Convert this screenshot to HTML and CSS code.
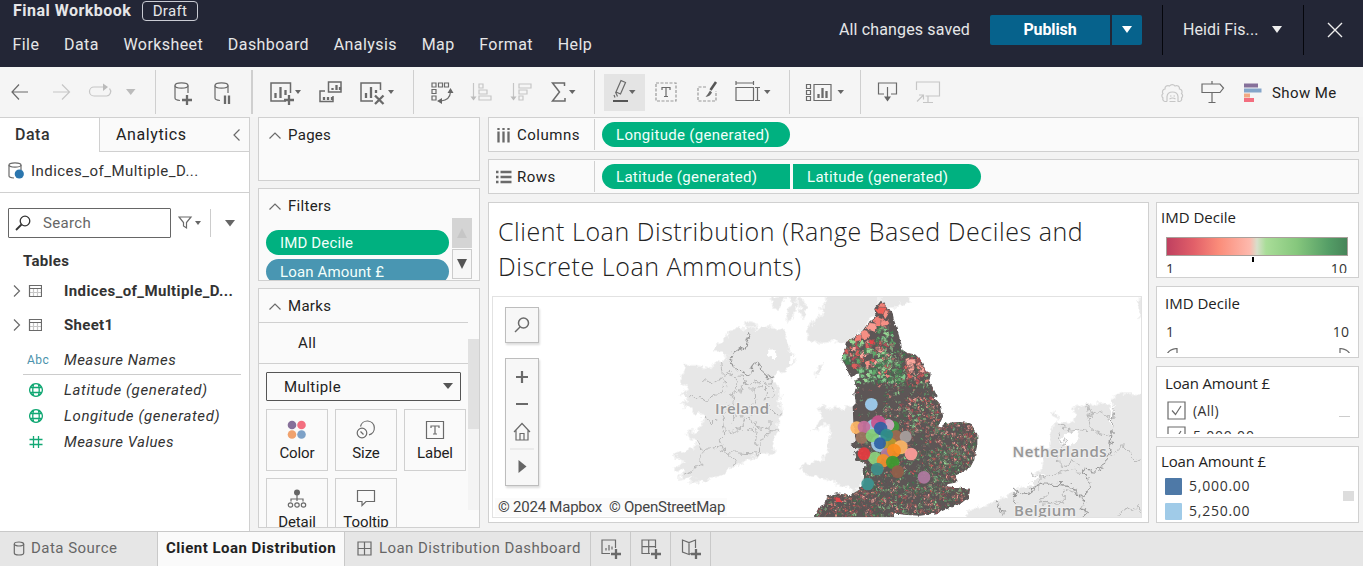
FILE: index.html
```html
<!DOCTYPE html>
<html lang="en">
<head>
<meta charset="utf-8">
<title>Final Workbook</title>
<link rel="stylesheet" href="styles.css">
</head>
<body>
<div class="app">
  <header class="top">
    <div class="top-left">
      <div class="title-row"><span class="wb">Final Workbook</span><span class="draft">Draft</span></div>
      <nav class="menu"><span>File</span><span>Data</span><span>Worksheet</span><span>Dashboard</span><span>Analysis</span><span>Map</span><span>Format</span><span>Help</span></nav>
    </div>
    <div class="top-right">
      <span class="saved">All changes saved</span>
      <div class="publish"><span class="pub-main">Publish</span><span class="pub-drop"><svg width="10" height="8"><path d="M0 0h10l-5 7z" fill="#fff"/></svg></span></div>
      <div class="user"><span>Heidi Fis...</span><svg width="10" height="8"><path d="M0 0h10l-5 7z" fill="#eee"/></svg></div>
      <div class="close"><svg width="16" height="16"><path d="M1 1l14 14M15 1L1 15" stroke="#eee" stroke-width="1.400"/></svg></div>
    </div>
  </header>

  <div class="toolbar">
    <svg class="tb" width="155" height="50" viewBox="0 67 155 50">
      <path d="M28 92H12M19 84.500L12 92l7 7.500" class="i"/>
      <path d="M53 92h16M62 84.500L69.500 92 62 99.500" class="i l"/>
      <path d="M100 87h-6a4.500 4.500 0 0 0 0 9h12.500a4.500 4.500 0 0 0 3-7.500M98 87h7" class="i l"/><path d="M103 83.500l5 3.500-5 4z" class="fl"/>
      <path d="M126 89h9.500l-4.750 6z" class="fl"/>
    </svg>
    <i class="sep"></i>
    <svg class="tb" width="95" height="50" viewBox="156 67 95 50">
      <g class="i"><ellipse cx="181.500" cy="85.500" rx="6.500" ry="2.700"/><path d="M175 85.500v12.500q0 2 5 2.500M188 85.500v7.500"/>
      <ellipse cx="221.500" cy="85.500" rx="6.500" ry="2.700"/><path d="M215 85.500v12.500q0 2 5 2.500M228 85.500v7.500"/></g>
      <path d="M187 95v10M182 100h10M225 95.500v8.500M229 95.500v8.500" class="b"/>
    </svg>
    <i class="sep wide"></i>
    <svg class="tb" width="160" height="50" viewBox="253 67 160 50">
      <path d="M290.500 93V83h-19.500v18h15M380.500 90V83h-19.500v18h12" class="i w"/>
      <path d="M275.500 93v5M280.500 87v11M285.500 90v5M366 93v5M371 87v11M376 90v3M332.500 88v2M336.500 85v5M340 87v3M324 97v3M328 97v3M332 97v3" class="b"/>
      <path d="M289 95v10M284 100h10M375 95.500l8.500 8.500M383.500 95.500l-8.500 8.500" class="b"/>
      <path d="M328.500 82h12.500v10h-12.500zM325 91h-5v10.500h13V96" class="i w"/>
      <path d="M295 90h6l-3 4zM388 90h6l-3 4z" class="f"/>
    </svg>
    <i class="sep"></i>
    <svg class="tb" width="180" height="50" viewBox="414 67 180 50">
      <path d="M432 83h4v4h-4zM438.500 83h4v4h-4zM444.500 83h4v4h-4zM432 89.500h4v4h-4zM432 96h4v4h-4zM441 101q9-1 9.500-9" class="i"/><path d="M450.500 88l3 5h-6zM437 101l5-3v6z" class="f"/>
      <path d="M473.500 83v14M513.500 83v14M479 84h4v4h-4zM479 90h8v4h-8zM479 96h12v4h-12zM519 84h12v4h-12zM519 90h8v4h-8zM519 96h4v4h-4z" class="i l"/>
      <path d="M470.500 96.500h6l-3 4zM510.500 96.500h6l-3 4z" class="fl"/>
      <path d="M564.500 86v-3H552.500l7 9-7 9h12.500v-3" class="i w"/><path d="M569 90h6.500l-3.250 4z" class="f"/>
    </svg>
    <i class="sep"></i>
    <svg class="tb" width="194" height="50" viewBox="595 67 194 50">
      <path d="M604 74h41v37h-41z" fill="#e4e4e4"/>
      <path d="M621 80.500l4.500 2-5 11.500-4.500-2zM615.500 92l2 4.500M614 95l1 2.500" class="i"/><path d="M613 101h15" stroke="#555" stroke-width="2"/><path d="M629 90h6.500l-3.250 4zM764 90h6.500l-3.250 4z" class="f"/>
      <path d="M656 83h20v18h-20z" class="i d"/><path d="M662 90v-2.500h8V90M666 88v8.500M664 96.500h4" class="i"/>
      <path d="M706 87h-8v14h18V91" class="i d"/><path d="M716 82l-5.500 8" stroke="#555" stroke-width="2.600" fill="none"/><path d="M710 90.500l2 2q-2 4-6.500 4.500 2.500-3 4.500-6.500z" class="f"/>
      <path d="M736 83h17.500M736 81v4M753.500 81v4M736 87.500h17.500v13H736zM755 87.500h5M757.500 87.500v13M755 100.500h5" class="i"/>
    </svg>
    <i class="sep"></i>
    <svg class="tb" width="70" height="50" viewBox="790 67 70 50">
      <path d="M806.500 84.500h4v4h-4zM806.500 90.500h4v4h-4zM806.500 96.500h4v4h-4zM814 84.500h17v16h-17z" class="i"/><path d="M818.500 94v4M822.500 88v10M826.500 91v7" class="b"/><path d="M837.500 90h6.500l-3.250 4z" class="f"/>
    </svg>
    <i class="sep"></i>
    <svg class="tb" width="100" height="50" viewBox="861 67 100 50">
      <path d="M884 94h-5.500V83h18v11H891M887.500 87v11" class="i"/><path d="M884 96.500h7l-3.500 5z" class="f"/>
      <path d="M916.500 90v-8h23v14h-14M928 96v6M923 102.500h10M917 101.500l6-6M919 95h4.500v4.500" class="i l"/>
    </svg>
    <svg class="tb right" width="80" height="50" viewBox="1155 67 80 50">
      <path d="M1167 101.500h-2a2.500 2.500 0 0 1-2-3.500 2.800 2.800 0 0 1 0-4.500 2.800 2.800 0 0 1 2-4.500 3 3 0 0 1 4.500-3 3.400 3.400 0 0 1 5.500 0 3 3 0 0 1 4.500 3 2.800 2.800 0 0 1 2 4.500 2.800 2.800 0 0 1 0 4.500 2.500 2.500 0 0 1-2 3.500h-2M1167 101.500v-5q.5-4.500 5.500-4.500t5.500 4.500v5M1169.500 99q3-2 6 0M1170 96h1.500M1173.500 96h1.500M1169.500 101.500h6" class="i l"/>
      <path d="M1202 84h18l3.500 4-3.500 4.500h-18zM1212 81v3M1212 92.500v10M1208.500 102.500h7" class="i"/>
    </svg>
    <div class="showme"><svg width="18" height="20"><path d="M0 .5h14v4H0z" fill="#86709a"/><path d="M0 5.500h17.500v4H0z" fill="#84a5c9"/><path d="M0 10.500h6v4H0z" fill="#f0a882"/><path d="M0 15h10v4H0z" fill="#f36e7f"/></svg><span>Show Me</span></div>
  </div>

  <div class="work">
    <aside class="data-pane">
      <div class="tabs"><span class="tab on">Data</span><span class="tab off">Analytics<svg width="7" height="12"><path d="M6.500.5L1 6l5.500 5.500" class="i"/></svg></span></div>
      <div class="source"><svg width="17" height="18"><path d="M1 3v11q0 1.500 5 2M13 3v5" class="i"/><ellipse cx="7" cy="3" rx="6" ry="2.200" class="i"/><circle cx="11.300" cy="12" r="4.600" fill="#2b76ae"/></svg><span>Indices_of_Multiple_D...</span></div>
      <div class="search-row">
        <div class="search"><svg width="16" height="16"><circle cx="10" cy="6" r="4.800" fill="none" stroke="#333" stroke-width="1.300"/><path d="M6.500 9.500L1 15" stroke="#333" stroke-width="1.800"/></svg><span>Search</span></div>
        <svg class="funnel" width="23" height="14"><path d="M1 1h12L8.500 6.500V12l-3-2V6.500z" class="i"/><path d="M17 5h6l-3 4z" class="f"/></svg>
        <i></i>
        <svg width="10" height="7"><path d="M0 0h10L5 6.500z" class="f"/></svg>
      </div>
      <h3>Tables</h3>
      <div class="trow"><svg width="29" height="14"><path d="M1 1.500L6.500 7 1 12.500" class="i"/><g transform="translate(16 1)"><path d="M4.500 4v7.500M8.500 4v7.500M.5 7.500h12" class="i l"/><path d="M.5.500h12v11H.5zM.5 3.500h12" class="i"/></g></svg><span>Indices_of_Multiple_D...</span></div>
      <div class="trow"><svg width="29" height="14"><path d="M1 1.500L6.500 7 1 12.500" class="i"/><g transform="translate(16 1)"><path d="M4.500 4v7.500M8.500 4v7.500M.5 7.500h12" class="i l"/><path d="M.5.500h12v11H.5zM.5 3.500h12" class="i"/></g></svg><span class="tight">Sheet1</span></div>
      <div class="field names"><b>Abc</b><span>Measure Names</span></div>
      <div class="field"><svg width="14" height="14"><path d="M7 .7a6.300 6.300 0 1 0 .01 0zM1.500 4.500h11M1.500 9.500h11M4.500 1.500q-1.500 5.500 0 11M9.500 1.500q1.500 5.500 0 11" class="g"/></svg><span class="wide">Latitude (generated)</span></div>
      <div class="field"><svg width="14" height="14"><path d="M7 .7a6.300 6.300 0 1 0 .01 0zM1.500 4.500h11M1.500 9.500h11M4.500 1.500q-1.500 5.500 0 11M9.500 1.500q1.500 5.500 0 11" class="g"/></svg><span class="wide">Longitude (generated)</span></div>
      <div class="field"><svg width="14" height="14"><path d="M4.500 1v12M9.500 1v12M.5 4.500h13M.5 9.500h13" class="g"/></svg><span>Measure Values</span></div>
    </aside>

    <section class="cards">
      <div class="card pages"><div class="head"><svg width="12" height="7"><path d="M.5 6.500L6 1l5.500 5.500" class="i"/></svg>Pages</div></div>
      <div class="card filters">
        <div class="head"><svg width="12" height="7"><path d="M.5 6.500L6 1l5.500 5.500" class="i"/></svg>Filters</div>
        <div class="filter-body">
          <div class="pills"><span class="pill gr">IMD Decile</span><span class="pill bl">Loan Amount £</span></div>
          <div class="scroller"><span class="up"><svg width="10" height="10"><path d="M5 0l5 10H0z" fill="#c6c6c6"/></svg></span><span class="dn"><svg width="10" height="10"><path d="M0 0h10L5 10z" fill="#555"/></svg></span></div>
        </div>
      </div>
      <div class="card marks">
        <div class="marks-main">
          <div class="head"><svg width="12" height="7"><path d="M.5 6.500L6 1l5.500 5.500" class="i"/></svg>Marks</div>
          <div class="all">All</div>
          <div class="select"><span>Multiple</span><svg width="10" height="7"><path d="M0 0h10L5 6z" fill="#555"/></svg></div>
          <div class="mgrid">
            <div><svg width="20" height="20"><circle cx="5" cy="5" r="4.300" fill="#86709a"/><circle cx="14.500" cy="5" r="4.300" fill="#f36e7f"/><circle cx="5" cy="14.500" r="4.300" fill="#f0a26e"/><circle cx="14.500" cy="14.500" r="4.300" fill="#7da1c7"/></svg>Color</div>
            <div><svg width="20" height="20"><path d="M4.500 6.500A7 7 0 1 1 13 14.800" class="i"/><circle cx="6" cy="13" r="4.800" class="i"/><path d="M4.500 11.500l3 3" class="i"/></svg>Size</div>
            <div><svg width="20" height="20"><path d="M1.500 1.500h17v17h-17zM6 8V6h8v2M10 6v8M8 14h4" class="i"/></svg>Label</div>
            <div><svg width="20" height="20"><circle cx="10" cy="3.500" r="3" class="f"/><path d="M10 5v7M4 12.500V10h12v2.500" class="i"/><g class="i"><circle cx="3.500" cy="16" r="2.200"/><circle cx="10" cy="16" r="2.200"/><circle cx="16.500" cy="16" r="2.200"/></g></svg>Detail</div>
            <div><svg width="20" height="20"><path d="M1.500 1.500h17v11H10L6 16.500v-4H1.500z" class="i"/></svg>Tooltip</div>
          </div>
        </div>
        <div class="track"><i></i></div>
      </div>
    </section>

    <main class="sheet">
      <div class="shelf"><div class="label"><svg width="16" height="16"><path d="M2.500 4.500v11M7.500 4.500v11M12.500 4.500v11M2.500 1v2M7.500 1v2M12.500 1v2" class="b"/></svg>Columns</div><span class="pill gr w">Longitude (generated)</span></div>
      <div class="shelf"><div class="label"><svg width="16" height="16"><path d="M4.500 3h11M4.500 8h11M4.500 13h11M0 3h2.500M0 8h2.500M0 13h2.500" class="b"/></svg>Rows</div><span class="pill gr w flat-r">Latitude (generated)</span><span class="pill gr w flat-l">Latitude (generated)</span></div>
      <div class="view">
        <div class="viz">
          <h1>Client Loan Distribution (Range Based Deciles and<br>Discrete Loan Ammounts)</h1>
          <div class="map">
            <svg width="648" height="220" viewBox="493 297 648 220">
              <filter id="coast" x="-5%" y="-5%" width="110%" height="110%"><feTurbulence type="fractalNoise" baseFrequency=".05" numOctaves="3" seed="4"/><feDisplacementMap in="SourceGraphic" scale="30" xChannelSelector="R" yChannelSelector="G"/></filter>
              <filter id="edge" x="-5%" y="-5%" width="110%" height="110%"><feTurbulence type="fractalNoise" baseFrequency=".09" numOctaves="2" seed="9"/><feDisplacementMap in="SourceGraphic" scale="12" xChannelSelector="R" yChannelSelector="G"/></filter>
              <g transform="translate(660 290) scale(.3333)">
                <g filter="url(#coast)">
                <g class="land">
                  <path d="M160 185l30-35 15-22 30-16 18 8 9-22 28 8-5 10 35-6 40 4 15 16 12 35-3 20 17 5 4 25-20 20-12 6-24 7-4 12 0 18 12 22 4 40 3 35-12 52-15 40 5 20-40 5-30 15-30 14-30 14-40 25-50 16-35 2 14-16-48 6 20-22-30-10 30-20-34-20 24-10 42-10 8-25-26-5-5-20 36-10 10-20 5-14-72-42 30-8-30-16 30-20-25-10-4-28 15-32h35l40 8 10-14 24-8 14-16z"/>
                  <path d="M497 5l3 30-20 20 5 20-30 25-15 25 5 20 35 15 40-5 40 5 30-25 50-55 100-45V5z"/>
                  <path d="M660 5v60l90-30V5zM330 30l15-12 32 0-2 18-24 24-11-14zM390 15l18 8 2 28-16 40-12 8-2-34 14-20zM415 22l20 8 2 40-12 12-9-34zM465 245l15-22 12-2-6 24-15 13zM250 100l10-8 28 6-14 20z"/>
                  <path d="M470 355l20-7 12 10 38-4 40-6 100 0 0 180-70 30-10 40-22 4-30-14-30-16-34-6-30-6-20-10-14-15 16-14 50-10 14-20 10-46-5-42-12-2-20 20-15-4 20-28 10-10z"/>
                </g>
                <path d="M325 180l22-3 2 18-9 13-15-10zM388 198l8-10 5 25-14 15z" fill="#fff"/>
                <path class="border" d="M270 130l-8 20-6 24-20 5-10 6-21 27 30 28 26 12 14-7 11-28 8-1 10 16 2 16 20 17 20-5"/>
                <path class="county" d="M185 212l5 40 22 8 38-2 10 30 25-14 20 8 40-10M88 320l32 0 16 12 24-18 32-4 6-30-8-14-30 10-28-4M192 256l20-10 20 26-4 24-14 30M260 284l-36 26-6 34 10 20M262 300l26 0 2 26-20 34M288 300l30-18 30 24M318 282l-4 48 30-10M130 380l22 18 20-2M205 340l-16 40 8 50-16 16 6 26M228 364l-16 36M236 372l20 20 16-16 12 38 24 4 20-10M256 392l-14 26-40 10M262 418l30 6-6 30 16 38M112 450l12 32-2 44-46 32M124 480l46-8 34 16 90 4M204 488l24 34M292 488l16-40 22-26 28 2M330 390v40M250 258l10 30M310 340l30 30 20 2"/>
                </g>
              </g>
              <g transform="translate(810 290) scale(.3333)">
                <g filter="url(#coast)">
                <path class="land" d="M470 665l50-20 40-10 40-25 40-20 30-30 20-20 25-60 10-60 10-25 25 0 25 5 15-30-10-15 40-10 50-5 25 5 0-25 45-10 70 5V730H470zM728 368l10-2 8 16-8 8zM985 30l30-10v50l-22 10z"/>
                <path d="M755 445l35-28 18 6-6 26-22 20-20 2zM628 580l40-20 50-8-60 24 20 14-40 4zM902 322l6-14 4 60-6 60-4-50z" fill="#fff"/>
                <path class="county" d="M836 345l8 30-8 34 30 20 34 10M750 395l14 28 40-6 30 8M836 380l30-16 40 20M750 430l14 30-20 36 4 34 44-14 20 6M660 548l30 14 40-10 40-12 50 8 26 30M690 560v40M690 640l70-10 0-30M760 600l50 10 10 30M900 500l40-36 24 30 22 20M925 675l34-24 10 16 18-18 4 20M715 605l-26 30 60 12 14-10"/>
                <path class="border" d="M913 365l-8 75-6 26 4 14-18 26-4 24-30 10-28-2-5 12 14 10 4 34-8 24-20 6-8-24-14-6-6-8-30-2-50-2-20 8-26 20-24-4-16-8 6 40M560 630l10 30 14 4-4 12M815 620l12 20-14 10 16 20-10 10"/>
                </g>
              </g>
              <g class="maplabel"><text x="715" y="413.500" textLength="54">Ireland</text><text x="1012.500" y="456.500" textLength="94">Netherlands</text><text x="1014" y="515.500" textLength="62">Belgium</text></g>
              <g transform="translate(810 290) scale(.3333)">
                <clipPath id="eng"><path id="engp" d="M213 35l9 7 10 18 13 5 5 25 10 30 10 35 5 25 15 10 25 5 15 15 15 30 15 15-5 20 10 15 15 30-15-5 25 30 7 35-12 25-10 3 20 7 15-15 40-2 30 4 20 28v35l-10 45-10 20-30 18-15 7 5 20-25 5-15 10 78 8-3 22-25 20-40 15-30 13-50 7-50-3-30-4-10 40H0l30-58 15-5 5-23 30-10 40 6 30-18 15-25-5-35 10-20-30-10-5-20 20-15-25-5-5-5 15-10-8-60-2-45 10-10-5-30 5-20-5-20 15-5v-15l-10-2-15 14-10-22-10-20-8-13 8-25 5-25 30-15 20-20 15-20 25-20-5-25z"/></clipPath>
                <g filter="url(#edge)">
                  <use href="#engp" fill="#5d5757" stroke="#5d5757" stroke-width="4"/>
                  <g id="cells" clip-path="url(#eng)"></g>
                </g>
                <g id="dots"></g>
              </g>
            </svg>
            <div class="mctl find"><svg width="18" height="18"><circle cx="10.500" cy="7" r="5" class="i w"/><path d="M7 11l-5 5" class="i w"/></svg></div>
            <div class="mctl tools">
              <svg width="32" height="126" viewBox="0 0 32 126"><path d="M16 12v12M10 18h12M10 45h12" class="i t"/><path d="M8 73l8-8.500 8 8.500M10 71v10h12V71M14 81v-6.500h4V81" class="i"/><path d="M4 90h24" stroke="#ddd"/><path d="M12.500 101l8 6.500-8 6.500z" class="f"/></svg>
            </div>
            <div class="attrib">© 2024 Mapbox&nbsp; © OpenStreetMap</div>
          </div>
        </div>
        <div class="legends">
          <div class="leg l1"><h4>IMD Decile</h4><div class="ramp"></div><i class="tick"></i><div class="range cut"><span>1</span><span>10</span></div></div>
          <div class="leg l2"><h4>IMD Decile</h4><div class="range"><span>1</span><span>10</span></div><div class="handles"><svg width="12" height="6"><path d="M1 6Q4 1 11 .5V6" class="i"/></svg><svg width="12" height="6"><path d="M11 6Q8 1 1 .5V6" class="i"/></svg></div></div>
          <div class="leg l3"><h4>Loan Amount £</h4><div class="checks"><div><svg width="19" height="19"><path d="M1 1h17v17H1zM5 9.500l3.500 4L14 5" class="i"/></svg><span>(All)</span></div><div><svg width="19" height="19"><path d="M1 1h17v17H1zM5 9.500l3.500 4L14 5" class="i"/></svg><span class="num">5,000.00</span></div></div><i class="bar"></i></div>
          <div class="leg l4"><h4>Loan Amount £</h4><div class="sw"><i class="c1"></i>5,000.00</div><div class="sw"><i class="c2"></i>5,250.00</div><i class="thumb"></i></div>
        </div>
      </div>
    </main>
  </div>

  <footer class="sheets">
    <span class="st ds"><svg width="12" height="15"><ellipse cx="6" cy="3" rx="4.700" ry="2" class="i"/><path d="M1.300 3v9q0 2 4.700 2t4.700-2V3" class="i"/></svg>Data Source</span>
    <span class="st cur">Client Loan Distribution</span>
    <span class="st dash"><svg width="15" height="15"><path d="M1 1h13v13H1zM7.500 1v13M1 7.500h13" class="i"/></svg>Loan Distribution Dashboard</span>
    <span class="st add"><svg width="20" height="20"><path d="M14.500 9V1H1v13.500h8" class="i"/><path d="M5 9v2.500M8 6v5.500M11 7.500v3" class="i"/><path d="M15 10v10M10 15h10" class="b"/></svg></span>
    <span class="st add"><svg width="20" height="20"><path d="M14.500 9V1H1v13.500h8M7.700 1v13.500M1 7.700h13.500" class="i"/><path d="M15 10v10M10 15h10" class="b"/></svg></span>
    <span class="st add"><svg width="20" height="20"><path d="M14.500 9V1L8 3.500 1.500 1v12L8 15.500V3.500M8 15.500l2-1" class="i"/><path d="M15 10v10M10 15h10" class="b"/></svg></span>
  </footer>
</div>
<script src="map.js"></script>
</body>
</html>
```
FILE: styles.css
```css
* { box-sizing: border-box; }
body { margin: 0; font: 15px/20px Roboto, "Liberation Sans", sans-serif; letter-spacing: .35px; color: #333; }
svg { display: block; flex: none; }
.app { width: 1363px; height: 566px; display: flex; flex-direction: column; overflow: hidden; background: #f3f3f3; }
h1, h3, h4 { margin: 0; }

.i { fill: none; stroke: #6a6a6a; stroke-width: 1.2; }
.i.l { stroke: #c6c6c6; }
.i.w { stroke-width: 1.5; }
.i.t { stroke-width: 2.2; }
.i.d { stroke: #999; stroke-dasharray: 3 1.5; }
.f { fill: #666; stroke: none; }
.fl { fill: #bbb; }
.b { fill: none; stroke: #6a6a6a; stroke-width: 2.3; }
.g { fill: none; stroke: #12a874; stroke-width: 1.3; }

/* header */
.top { height: 67px; flex: none; background: #232636; color: #e6e6e8; display: flex; justify-content: space-between; font-size: 16px; }
.title-row { display: flex; padding-left: 13px; height: 21px; align-items: center; }
.wb { font-weight: 700; letter-spacing: .48px; width: 129px; }
.draft { font-size: 15px; line-height: 18px; border: 1px solid #c9cbd3; border-radius: 4px; width: 56px; height: 20px; text-align: center; margin-top: 1px; }
.menu { display: flex; gap: 24.7px; padding: 14px 0 0 12.5px; letter-spacing: .42px; }
.top-right { display: flex; height: 60px; align-items: center; }
.saved { letter-spacing: .14px; margin-right: 20px; }
.publish { display: flex; gap: 2px; margin-right: 20px; color: #fff; }
.publish span { background: #06628c; height: 30px; display: flex; align-items: center; justify-content: center; }
.pub-main { width: 120px; font-weight: 700; letter-spacing: -.1px; border-radius: 2px 0 0 2px; }
.pub-drop { width: 30px; border-radius: 0 2px 2px 0; }
.user { border-left: 1px solid #05060c; border-right: 1px solid #05060c; width: 142px; height: 50px; display: flex; align-items: center; gap: 13px; padding-left: 20px; letter-spacing: .1px; }
.close { width: 59px; padding-left: 23px; }

/* toolbar */
.toolbar { height: 50px; flex: none; display: flex; background: #f5f5f5; }
.sep { width: 1px; height: 44px; margin-top: 3px; background: #cfcfcf; }
.sep.wide { width: 2px; }
.right { margin-left: auto; }
.showme { display: flex; align-items: center; gap: 10px; width: 128px; padding-left: 9px; color: #222; letter-spacing: .4px; padding-top: 2px; }

.work { flex: none; height: 414px; display: flex; }

/* data pane */
.data-pane { width: 250px; background: #fff; border-right: 1px solid #d0d0d0; border-top: 1px solid #d0d0d0; }
.tabs { display: flex; height: 34px; font-size: 16px; font-weight: 500; line-height: 33px; }
.tab.on { width: 99px; padding-left: 15px; letter-spacing: .5px; }
.tab.off { flex: 1; background: #fafafa; border-left: 1px solid #d0d0d0; border-bottom: 1px solid #d0d0d0; display: flex; align-items: center; justify-content: space-between; padding: 0 9px 0 16px; font-weight: 400; color: #222; letter-spacing: .6px; }
.source { display: flex; height: 41px; align-items: center; padding: 0 0 3px 8px; gap: 6px; border-bottom: 1px solid #d0d0d0; letter-spacing: .46px; }
.search-row { display: flex; align-items: center; padding: 15px 0 0 8px; height: 45px; }
.search { width: 163px; height: 30px; border: 1px solid #666; border-radius: 1px; display: flex; align-items: center; gap: 12px; padding-left: 6px; color: #666; }
.funnel { margin-left: 7px; }
.search-row i { width: 1px; height: 28px; background: #ccc; margin: 0 14px 0 9px; }
.data-pane h3 { font: 700 15px/20px Roboto, sans-serif; padding: 13px 0 0 23px; letter-spacing: .3px; }
.trow { display: flex; align-items: center; gap: 22px; padding-left: 13px; margin-top: 10px; height: 20px; font-weight: 700; letter-spacing: .4px; }
.trow + .trow { margin-top: 14px; }
.trow .tight { letter-spacing: .3px; }
.field { display: flex; align-items: center; margin: 0 8px 0 23px; padding-left: 6px; height: 26px; font-style: italic; letter-spacing: .45px; }
.field svg { margin-right: 21px; }
.field .wide { letter-spacing: .62px; }
.field.names { height: 29px; margin-top: 11px; border-bottom: 1px solid #ccc; margin-bottom: 2px; padding-left: 4px; }
.field.names b { width: 37px; font: 12px/18px Roboto, sans-serif; color: #4a92ac; }

/* cards */
.cards { width: 229px; padding-left: 8px; display: flex; flex-direction: column; gap: 7px; }
.card { width: 222px; border: 1px solid #d0d0d0; background: #fafafa; overflow: hidden; flex: none; }
.head { display: flex; align-items: center; gap: 7px; padding-left: 10px; height: 34px; color: #222; letter-spacing: .3px; }
.pages { height: 64px; }
.filters { height: 93px; }
.marks { height: 240px; display: flex; }
.filter-body { display: flex; justify-content: space-between; padding: 0 7px; margin-top: -5px; }
.pills { display: flex; flex-direction: column; gap: 4px; padding-top: 12px; }
.pill { height: 25px; line-height: 26px; border-radius: 13px; color: #f2fffb; padding-left: 14px; width: 183px; letter-spacing: .15px; }
.gr { background: #00b180; }
.bl { background: #4996b2; }
.scroller span { display: flex; align-items: center; justify-content: center; width: 20px; height: 30px; background: #d4d4d4; margin-bottom: 1px; }
.scroller .dn { background: #f7f7f7; border: 1px solid #ccc; }
.marks-main { width: 209px; flex: none; }
.all { border-top: 1px solid #d0d0d0; border-bottom: 1px solid #d0d0d0; height: 42px; line-height: 40px; padding-left: 39px; margin-top: -1px; color: #222; }
.select { margin: 8px 0 0 7px; width: 195px; height: 29px; border: 1px solid #555; border-radius: 1px; display: flex; justify-content: space-between; align-items: center; padding: 0 7px 0 17px; letter-spacing: .43px; color: #222; }
.mgrid { display: grid; grid-template-columns: repeat(3, 62px); gap: 7px; padding: 8px 0 0 7px; color: #222; }
.mgrid div { height: 62px; border: 1px solid #d0d0d0; display: flex; flex-direction: column; align-items: center; padding-top: 10px; gap: 3px; letter-spacing: -.1px; }
.track { width: 12px; height: 171px; margin-top: 50px; background: #f4f4f4; }
.track i { display: block; width: 12px; height: 90px; background: #e1e1e1; }

/* sheet */
.sheet { width: 871px; margin-left: 9px; display: flex; flex-direction: column; }
.shelf { height: 35px; margin-bottom: 7px; border: 1px solid #d0d0d0; background: #fafafa; display: flex; align-items: center; flex: none; }
.label { width: 106px; height: 31px; border-right: 1px solid #d0d0d0; display: flex; align-items: center; gap: 5px; padding-left: 7px; letter-spacing: .5px; color: #222; margin-right: 7px; box-shadow: 0 -1px #d0d0d000; }
.pill.w { width: 188px; letter-spacing: .3px; }
.flat-r { border-radius: 13px 0 0 13px; margin-right: 3px; }
.flat-l { border-radius: 0 13px 13px 0; }
.view { display: flex; justify-content: space-between; margin-top: 1px; }
.viz { width: 661px; height: 321px; border: 1px solid #d0d0d0; background: #fff; padding: 0 0 0 3px; }
h1 { font: 300 25px/35px "Open Sans", sans-serif; letter-spacing: .55px; padding: 11px 0 0 6px; height: 93px; white-space: nowrap; color: #222; }
.map { width: 650px; height: 222px; border: 1px solid #e2e2e2; position: relative; overflow: hidden; }
.land { fill: #e7e7e7; stroke: #f3f3f3; stroke-width: 4; stroke-linejoin: round; }
.border { fill: none; stroke: #979797; stroke-width: 3.5; stroke-linejoin: round; }
.county { fill: none; stroke: #b0b0b0; stroke-width: 2.6; stroke-linejoin: round; }
.maplabel { font: 600 15px "Open Sans", sans-serif; letter-spacing: 0; fill: #969696; stroke: #efefef; stroke-width: 2px; paint-order: stroke; }
.mctl { position: absolute; left: 12px; width: 34px; background: #f7f7f7; border: 1px solid #bdbdbd; box-shadow: 1px 2px 2px #ddd; }
.find { top: 10px; height: 36px; padding: 8px 7px; }
.tools { top: 61px; height: 128px; }
.attrib { position: absolute; left: 2px; bottom: 1px; height: 18px; line-height: 19px; padding: 0 2px 0 3px; background: rgba(250, 250, 250, .8); letter-spacing: -.23px; color: #444; }

/* legends */
.legends { width: 203px; font-family: "Open Sans", sans-serif; font-size: 14px; display: flex; flex-direction: column; gap: 8px; }
.leg { border: 1px solid #d0d0d0; background: #fff; position: relative; overflow: hidden; padding-left: 9px; }
.leg h4 { font-size: 15px; font-weight: 400; line-height: 20px; letter-spacing: 0; color: #222; white-space: nowrap; margin-left: -1px; }
.l3 h4, .l4 h4 { letter-spacing: -.15px; }
.l1 { height: 76px; }
.l1 h4, .l4 h4 { margin: 4px 0 0 -5px; }
.ramp { height: 19px; width: 182px; margin-top: 10px; border: 1px solid #a9a09b; background: linear-gradient(90deg, #bf4060, #e26069 15%, #fb8d7a 29%, #fdb9ad 46%, #d8dfcb 50%, #a9dd98 55%, #86c77d 72%, #549d66 90%, #478559); }
.tick { display: block; width: 2px; height: 5px; background: #000; margin: 1px 0 0 86px; }
.range { display: flex; justify-content: space-between; width: 183px; line-height: 20px; letter-spacing: .1px; }
.range.cut { height: 11px; overflow: hidden; width: 181px; line-height: 14px; margin-top: 0; }
.l2 { height: 72px; }
.l2 h4 { margin-top: 6px; }
.l2 .range { margin-top: 9px; }
.handles { display: flex; justify-content: space-between; width: 185px; margin-top: 6px; height: 5px; overflow: hidden; }
.l3 { height: 72px; }
.l3 h4 { margin-top: 6px; }
.checks { height: 33px; margin: 8px 0 0 1px; overflow: hidden; }
.checks div { display: flex; gap: 7px; height: 25px; line-height: 19px; }
.checks .num { letter-spacing: .8px; }
.bar, .thumb { position: absolute; right: 8px; top: 49px; width: 11px; height: 1px; background: #ccc; }
.l4 { height: 77px; }
.sw { display: flex; align-items: center; height: 22px; gap: 7px; margin: 4px 0 0 -1px; letter-spacing: .75px; line-height: 22px; }
.sw + .sw { margin-top: 3px; }
.sw i { width: 17px; height: 17px; border-radius: 1px; }
.c1 { background: #4e79a7; }
.c2 { background: #a0cbe8; }
.l4 .thumb { height: 10px; top: 44px; right: 4px; background: #ddd; }

/* sheet tabs */
.sheets { height: 35px; flex: none; background: #e6e6e6; border-top: 1px solid #c9c9c9; display: flex; line-height: 33px; color: #666; }
.st { border-right: 1px solid #c9c9c9; display: flex; align-items: center; flex: none; padding-bottom: 1px; }
.ds { width: 158px; padding-left: 13px; gap: 6px; letter-spacing: .48px; }
.cur { width: 187px; background: #fafafa; color: #222; font-weight: 700; letter-spacing: .48px; padding-left: 8px; }
.dash { width: 246px; padding-left: 12px; gap: 7px; letter-spacing: .44px; }
.add { width: 40px; padding-left: 10px; }
.add svg { margin-top: 1px; }
```
FILE: map.js
```js
const NS = 'http://www.w3.org/2000/svg';
let seed = 7;
const rnd = () => (seed = (seed * 16807) % 2147483647) / 2147483647;
const cells = document.getElementById('cells');
const greens = ['#7fc98a', '#5fa86b', '#417f50', '#96d894'];
const reds = ['#f58f84', '#dc5f5c', '#fba59b', '#b8505a'];
const cell = (x, y, r, color) => {
  const n = 6, turn = rnd() * 6, squash = 0.45 + rnd() * 0.5, tilt = rnd() * 180;
  const pts = [];
  for (let i = 0; i < n; i++) {
    const a = turn + i * 6.283 / n, d = r * (0.75 + rnd() * 0.4);
    pts.push((Math.cos(a) * d).toFixed(1) + ',' + (Math.sin(a) * d * squash).toFixed(1));
  }
  const p = document.createElementNS(NS, 'polygon');
  p.setAttribute('points', pts.join(' '));
  p.setAttribute('transform', `translate(${x} ${y}) rotate(${tilt})`);
  p.setAttribute('fill', color);
  p.setAttribute('stroke', '#5d5757');
  p.setAttribute('stroke-width', '1.4');
  cells.appendChild(p);
};
// [x, y, width, height, count, radius, share of red]
const zones = [
  [15, 590, 465, 100, 900, 4.3, 0.6], [150, 480, 300, 130, 560, 3.8, 0.22], [370, 395, 135, 180, 520, 4.3, 0.5],
  [290, 320, 110, 110, 160, 5, 0.7], [220, 280, 160, 250, 420, 3.8, 0.35], [130, 390, 100, 130, 140, 4, 0.4],
  [135, 270, 110, 110, 40, 4, 0.4], [240, 170, 120, 120, 200, 5, 0.25], [285, 200, 70, 75, 50, 10, 0.95],
  [140, 215, 140, 65, 110, 9, 0.08], [98, 150, 135, 80, 110, 10, 0.55], [200, 100, 50, 130, 60, 8, 0.15]
];
for (const [x, y, w, h, n, r, red] of zones) {
  for (let i = 0; i < n; i++) {
    const set = rnd() < red ? reds : greens;
    cell(x + rnd() * w, y + rnd() * h, r * (0.5 + rnd() * 0.7), set[Math.floor(rnd() * 4)]);
  }
}
for (const [x, y, r, c] of [[213, 48, 13, '#f28077'], [215, 62, 19, '#ee5f58'], [228, 72, 12, '#f58f84'], [207, 95, 17, '#f28077'], [225, 100, 12, '#f58f84'], [185, 110, 19, '#fa9c92'], [160, 132, 19, '#f58f84'], [145, 142, 12, '#f28077'], [183, 155, 9, '#e5454a'], [305, 215, 14, '#fba59b'], [85, 630, 12, '#e5454a']]) {
  cell(x, y, r * 1.15, c);
}
const dots = [[209, 460, 26, '#a0cbe8'], [195, 505, 20, '#8cd17d'], [190, 410, 22, '#a0cbe8'], [250, 410, 18, '#3f9a3d'], [235, 405, 18, '#d4a6c8'], [140, 413, 19, '#ffb766'], [162, 411, 19, '#c46f9c'], [205, 398, 22, '#c8528c'], [155, 443, 18, '#9c755f'], [187, 437, 20, '#86cf78'], [258, 440, 20, '#9c6a50'], [287, 440, 18, '#a89f9d'], [240, 465, 22, '#b6992d'], [212, 415, 20, '#2e62a4'], [230, 435, 19, '#2f8f8b'], [210, 460, 18, '#2e62a4'], [272, 472, 21, '#ffb766'], [230, 492, 18, '#b07aa1'], [220, 512, 20, '#f28e2b'], [252, 482, 21, '#f98c1e'], [303, 492, 19, '#ff9d9a'], [162, 491, 19, '#e6393f'], [248, 517, 20, '#3f9a2f'], [202, 537, 19, '#3d8f8a'], [263, 545, 19, '#93604a'], [342, 562, 19, '#b07aa1'], [173, 582, 19, '#3d9590'], [184, 343, 19, '#a0cff2']];
const layer = document.getElementById('dots');
for (const [x, y, r, c] of dots) {
  const e = document.createElementNS(NS, 'circle');
  e.setAttribute('cx', x);
  e.setAttribute('cy', y);
  e.setAttribute('r', r);
  e.setAttribute('fill', c);
  e.setAttribute('opacity', '.92');
  layer.appendChild(e);
}
```
